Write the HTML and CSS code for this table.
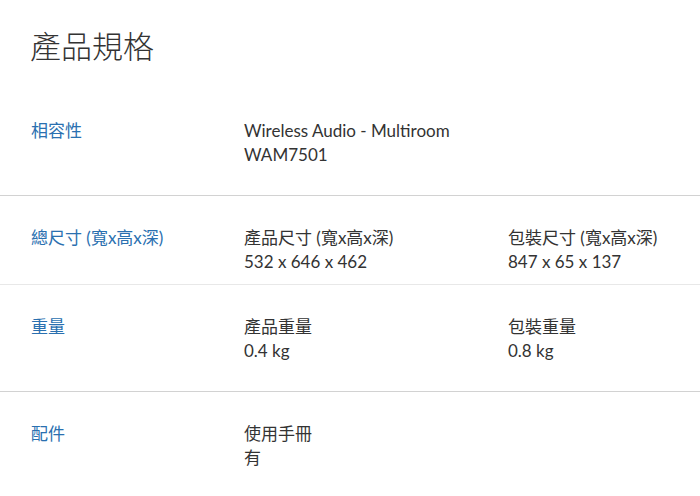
FILE: index.html
```html
<!DOCTYPE html>
<html lang="zh-Hant">
<head>
  <meta charset="UTF-8">
  <meta name="viewport" content="width=device-width, initial-scale=1.0">
  <title>產品規格</title>
  <link rel="stylesheet" href="styles.css">
</head>
<body>
  <h1>產品規格</h1>

  <div class="spec-row">
    <div class="spec-label">相容性</div>
    <div class="spec-value">
      <div>Wireless Audio - Multiroom</div>
      <div>WAM7501</div>
    </div>
  </div>

  <div class="spec-row spec-row-short">
    <div class="spec-label">總尺寸 (寬x高x深)</div>
    <div class="spec-value">
      <div>產品尺寸 (寬x高x深)</div>
      <div>532 x 646 x 462</div>
    </div>
    <div class="spec-value">
      <div>包裝尺寸 (寬x高x深)</div>
      <div>847 x 65 x 137</div>
    </div>
  </div>

  <div class="spec-row">
    <div class="spec-label">重量</div>
    <div class="spec-value">
      <div>產品重量</div>
      <div>0.4 kg</div>
    </div>
    <div class="spec-value">
      <div>包裝重量</div>
      <div>0.8 kg</div>
    </div>
  </div>

  <div class="spec-row spec-row-last">
    <div class="spec-label">配件</div>
    <div class="spec-value">
      <div>使用手冊</div>
      <div>有</div>
    </div>
  </div>
</body>
</html>
```

FILE: styles.css
```css
body {
  margin: 0;
  font-family: Lato, "Noto Sans CJK TC", sans-serif;
  font-size: 17px;
  line-height: 24px;
  color: #333;
  background: #fff;
}

h1 {
  font-family: "Noto Sans CJK TC", sans-serif;
  font-size: 31px;
  font-weight: 300;
  line-height: 45px;
  margin: 22px 0 22px 30px;
  color: #333;
}

.spec-row {
  display: grid;
  grid-template-columns: 213px 264px 1fr;
  padding: 30px 0 28px 31px;
  border-bottom: 1px solid #d2d2d2;
}

.spec-row-short {
  padding-bottom: 10px;
  border-bottom-color: #e8e8e8;
}

.spec-row-last {
  border-bottom: none;
}

.spec-label {
  color: #2a70b0;
}

.spec-value {
  color: #333;
}
```
